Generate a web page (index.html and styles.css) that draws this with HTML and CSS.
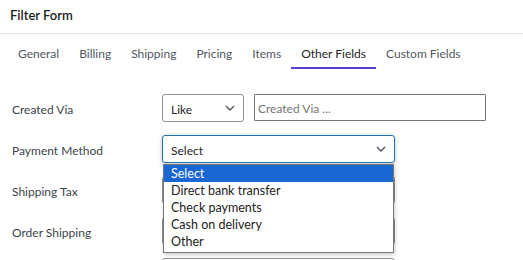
FILE: index.html
```html
<!doctype html>
<html lang="en">
    <head>
        <meta charset="utf-8">
        <title>Filter Form</title>
        <meta name="viewport" content="width=device-width, initial-scale=1">
        <link rel="stylesheet" href="styles.css">
    </head>
    <body>
        <div class="panel">
            <div class="panel-head">Filter Form</div>
            <nav class="tabs">
                <span class="tab">General</span>
                <span class="tab">Billing</span>
                <span class="tab">Shipping</span>
                <span class="tab">Pricing</span>
                <span class="tab">Items</span>
                <span class="tab active">Other Fields</span>
                <span class="tab">Custom Fields</span>
            </nav>
            <div class="fields">
                <div class="row">
                    <label class="label">Created Via</label>
                    <div class="controls">
                        <div class="select small">
                            <span class="value">Like</span>
                            <svg class="chev" viewBox="0 0 10 6"><path d="M1 1l4 4 4-4"/></svg>
                        </div>
                        <div class="input placeholder"><span class="value">Created Via ...</span></div>
                    </div>
                </div>
                <div class="row">
                    <label class="label">Payment Method</label>
                    <div class="controls">
                        <div class="select wide focus">
                            <span class="value">Select</span>
                            <svg class="chev" viewBox="0 0 10 6"><path d="M1 1l4 4 4-4"/></svg>
                            <ul class="dropdown">
                                <li class="picked">Select</li>
                                <li>Direct bank transfer</li>
                                <li>Check payments</li>
                                <li>Cash on delivery</li>
                                <li>Other</li>
                            </ul>
                        </div>
                    </div>
                </div>
                <div class="row">
                    <label class="label">Shipping Tax</label>
                    <div class="controls">
                        <div class="select wide"></div>
                    </div>
                </div>
                <div class="row">
                    <label class="label">Order Shipping</label>
                    <div class="controls">
                        <div class="select wide"></div>
                    </div>
                </div>
                <div class="row">
                    <label class="label"></label>
                    <div class="controls">
                        <div class="select wide"></div>
                    </div>
                </div>
            </div>
        </div>
    </body>
</html>
```

FILE: styles.css
```css
body {
	margin: 0;
	background: #fff;
	font-family: Lato, "Noto Sans", sans-serif;
	font-size: 12px;
	color: #1e1e1e;
}

.panel-head {
	height: 34px;
	box-sizing: border-box;
	padding: 0 10px 3px;
	display: flex;
	align-items: center;
	font-size: 13px;
	font-weight: 600;
	color: #1e1e1e;
	border-bottom: 1px solid #e0e0e0;
}

.tabs {
	display: flex;
	padding: 5px 8px 0;
	height: 35px;
	box-sizing: border-box;
	align-items: stretch;
}
.tab {
	display: flex;
	align-items: center;
	padding: 0 10px;
	color: #50575e;
	font-size: 12px;
	border-bottom: 2px solid transparent;
}
.tab.active {
	color: #1e1e1e;
	border-bottom-color: #5b3ecf;
}

.fields {
	padding-top: 25px;
}
.row {
	display: flex;
	align-items: center;
	height: 28px;
	margin-bottom: 13px;
}
.label {
	width: 150px;
	padding: 2px 0 0 12px;
	color: #3c434a;
}
.controls {
	display: flex;
	gap: 10px;
}
.value {
	padding-top: 2px;
}

.select {
	position: relative;
	box-sizing: border-box;
	height: 28px;
	border: 1px solid #8c8f94;
	border-radius: 3px;
	display: flex;
	align-items: center;
	justify-content: space-between;
	padding: 0 8px;
	background: #fff;
}
.select.small {
	width: 82px;
}
.select.wide {
	width: 233px;
}
.select.focus {
	border-color: #2271b1;
	box-shadow: 0 1px 4px rgba(0, 0, 0, 0.25);
}
.chev {
	width: 10px;
	height: 6px;
	fill: none;
	stroke: #50575e;
	stroke-width: 1.4;
}

.input {
	box-sizing: border-box;
	width: 232px;
	height: 27px;
	border: 1px solid #767676;
	border-radius: 1px;
	display: flex;
	align-items: center;
	padding: 0 3px;
}
.placeholder {
	color: #757575;
}

.dropdown {
	position: absolute;
	top: 28px;
	left: 0;
	width: 231px;
	box-sizing: border-box;
	margin: 0;
	padding: 0 0 2px;
	list-style: none;
	background: #fff;
	border: 1px solid #767676;
	box-shadow: 1px 2px 4px rgba(0, 0, 0, 0.2);
	z-index: 2;
}
.dropdown li {
	height: 17px;
	line-height: 18px;
	padding-left: 7px;
	color: #222;
	font-size: 12.5px;
}
.dropdown li.picked {
	background: #1a66d2;
	color: #fff;
}
```
